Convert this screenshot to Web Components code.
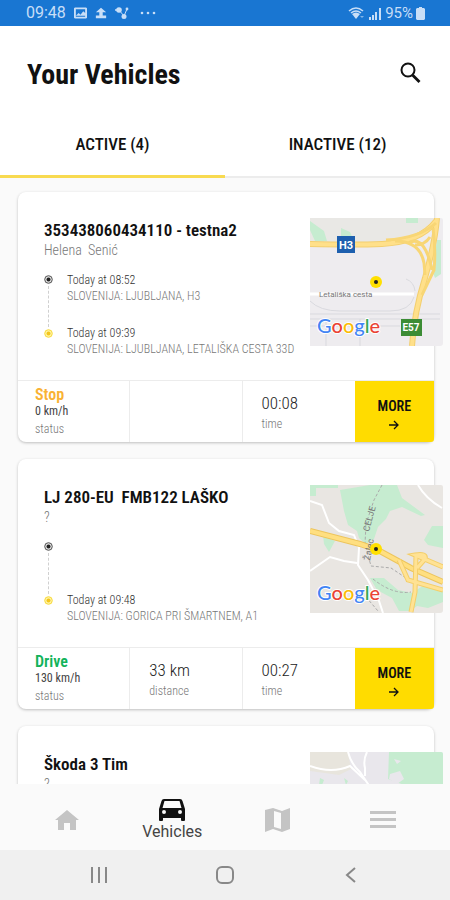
<!DOCTYPE html>
<html lang="en">
<head>
<meta charset="utf-8">
<meta name="viewport" content="width=device-width, initial-scale=1">
<title>Your Vehicles</title>
<style>
  html, body { margin: 0; height: 100%; }
  body {
    --narrow: "Roboto Condensed", "Liberation Sans Narrow", Roboto, sans-serif;
    --line: #ececec;
    --yellow: #ffdc00;
    font-family: var(--narrow);
    color: #111;
    background: #fafafa;
  }
</style>
</head>
<body>
<vehicles-app>
  <status-bar slot="top"></status-bar>
  <page-header slot="top">Your Vehicles</page-header>
  <tab-bar slot="top">
    <span slot="first">ACTIVE (4)</span>
    <span slot="second">INACTIVE (12)</span>
  </tab-bar>

  <vehicle-card>
    <span slot="name">353438060434110 - testna2</span>
    <span slot="driver">Helena  Senić</span>
    <span slot="from-time">Today at 08:52</span>
    <span slot="from-place">SLOVENIJA: LJUBLJANA, H3</span>
    <span slot="to-time">Today at 09:39</span>
    <span slot="to-place">SLOVENIJA: LJUBLJANA, LETALIŠKA CESTA 33D</span>
    <map-thumb slot="map" scene="junction"></map-thumb>
    <status-cell slot="cells" state="stop"><span slot="state">Stop</span><span slot="speed">0 km/h</span></status-cell>
    <stat-cell slot="cells"></stat-cell>
    <stat-cell slot="cells" label="time">00:08</stat-cell>
  </vehicle-card>

  <vehicle-card>
    <span slot="name">LJ 280-EU  FMB122 LAŠKO</span>
    <span slot="driver">?</span>
    <span slot="to-time">Today at 09:48</span>
    <span slot="to-place">SLOVENIJA: GORICA PRI ŠMARTNEM, A1</span>
    <map-thumb slot="map" scene="hills"></map-thumb>
    <status-cell slot="cells" state="drive"><span slot="state">Drive</span><span slot="speed">130 km/h</span></status-cell>
    <stat-cell slot="cells" label="distance">33 km</stat-cell>
    <stat-cell slot="cells" label="time">00:27</stat-cell>
  </vehicle-card>

  <vehicle-card brief>
    <span slot="name">Škoda 3 Tim</span>
    <span slot="driver">?</span>
    <map-thumb slot="map" scene="town"></map-thumb>
  </vehicle-card>

  <bottom-nav slot="bottom"></bottom-nav>
  <system-nav slot="bottom"></system-nav>
</vehicles-app>

<script>
const define = (name, html, setup) => {
  const template = document.createElement('template');
  template.innerHTML = html;
  customElements.define(name, class extends HTMLElement {
    constructor() {
      super();
      this.attachShadow({ mode: 'open' }).append(template.content.cloneNode(true));
    }
    connectedCallback() { if (setup) setup(this, this.shadowRoot); }
  });
};

define('vehicles-app', `
<style>
  :host { display: flex; flex-direction: column; height: 100vh; }
  main { flex: 1; min-height: 0; overflow: hidden; display: flex; flex-direction: column; gap: 17px; padding: 14px 16px 0 18px; box-sizing: border-box; }
</style>
<slot name="top"></slot>
<main><slot></slot></main>
<slot name="bottom"></slot>`);

define('status-bar', `
<style>
  :host { display: flex; align-items: center; justify-content: space-between; height: 26px; padding: 0 25px 0 26px; background: #1976d2; color: #c8def7; font: 16px/28px Roboto, sans-serif; }
  div { display: flex; align-items: center; gap: 8px; height: 28px; }
  .right { gap: 3px; font-size: 15px; }
  svg { display: block; fill: currentColor; }
</style>
<div>
  <span>09:48</span>
  <svg width="13" height="12" viewBox="0 0 14 12"><path fill-rule="evenodd" d="M1 0h12l1 1v10l-1 1H1l-1-1V1zM2 2v7l3-3 2 2 3-4 2 2V2zM2 10h10v-1H2z"/></svg>
  <svg width="12" height="12" viewBox="0 0 14 12"><path d="M7 0l6 5H9v4H5V5H1zM1 9h12v3H1z"/></svg>
  <svg width="14" height="12" viewBox="0 0 14 12"><circle cx="4" cy="3" r="2.800"/><circle cx="12" cy="2" r="1.400"/><circle cx="9" cy="9.500" r="2.500"/><path d="M4 3l5 6 3-7" fill="none" stroke="currentColor"/><circle cx="1" cy="3" r="1"/></svg>
  <svg width="20" height="4" viewBox="0 0 20 4"><circle cx="5" cy="2" r="1.300"/><circle cx="11" cy="2" r="1.300"/><circle cx="17" cy="2" r="1.300"/></svg>
</div>
<div class="right">
  <svg width="18" height="13" viewBox="0 0 18 13"><g fill="none" stroke="currentColor" stroke-width="1.500"><path d="M1 4q7-6 14 0M3 6q5-4 10 0"/></g><path d="M4 7q4-3 8 0l-4 5z"/><path d="M12 9l2 2 2-2z" opacity=".6"/></svg>
  <svg width="13" height="13" viewBox="0 0 13 13"><path d="M0 10h2v3H0zM3 8h2v5H3zM6 5h2v8H6z"/><path d="M10 1h2v12h-2z"/></svg>
  <span>95%</span>
  <svg width="9" height="13" viewBox="0 0 9 13"><path d="M3 0h3v1h2l1 1v10l-1 1H1l-1-1V2l1-1h2z"/></svg>
</div>`);

define('page-header', `
<style>
  :host { display: flex; align-items: center; justify-content: space-between; padding: 0 27px; height: 96px; background: #fff; }
  h1 { margin: 0; padding-top: 2px; font-size: 28px; line-height: 32px; font-weight: 700; }
  button { border: 0; padding: 0; background: none; color: #111; display: block; }
  svg { display: block; }
</style>
<h1><slot></slot></h1>
<button aria-label="Search"><svg width="24" height="24" viewBox="0 0 24 24"><circle cx="9" cy="8" r="6.500" fill="none" stroke="currentColor" stroke-width="2"/><path d="M13.500 13l7 7" stroke="currentColor" stroke-width="2.800"/></svg></button>`);

define('tab-bar', `
<style>
  :host { display: grid; grid-template-columns: 1fr 1fr; background: #fff; height: 56px; }
  button { border: 0; border-bottom: 2px solid var(--line); padding: 0 0 10px; background: none; color: #111; font: 500 17px/20px var(--narrow); }
  button[aria-selected="true"] { border-bottom: 3px solid #f8da50; }
</style>
<button role="tab" aria-selected="true"><slot name="first"></slot></button>
<button role="tab" aria-selected="false"><slot name="second"></slot></button>`);

define('vehicle-card', `
<style>
  :host { display: block; flex: none; }
  article { background: #fff; border-radius: 8px; box-shadow: 0 1px 3px rgba(0,0,0,.24); }
  .body { display: grid; grid-template-columns: 1fr 133px; align-items: start; padding: 26px 0 0 26px; margin-right: -9px; min-height: 162px; }
  h2 { margin: 0; padding-top: 1px; font-size: 17px; line-height: 22px; font-weight: 600; white-space: pre; }
  p { margin: 0; }
  .driver { font-size: 14px; line-height: 18px; font-weight: 300; color: #777; white-space: pre; }
  .trip { display: grid; grid-template-columns: 9px 1fr; column-gap: 14px; margin-top: 13px; }
  .rail { display: flex; flex-direction: column; align-items: center; padding: 3px 0 19px; }
  .rail i { flex: 1; border-left: 1px dashed #d0d0d0; margin: 2px 0; }
  .stops { display: grid; gap: 21px; }
  .stops p { min-height: 16px; font-size: 12px; line-height: 16px; font-weight: 300; white-space: nowrap; color: #777; }
  .stops .time { color: #333; }
  svg { display: block; }
  footer { display: grid; grid-template-columns: 112fr 112fr 112fr 79fr; height: 61px; border-top: 1px solid var(--line); }
  :host([brief]) footer, :host([brief]) .trip { display: none; }
  button { grid-column: 4; grid-row: 1; display: flex; flex-direction: column; align-items: center; justify-content: center; gap: 4px; border: 0; padding: 5px 0 0; background: var(--yellow); color: #111; font: 600 14px/18px var(--narrow); border-radius: 0 0 3px 0; }
</style>
<article>
  <div class="body">
    <div>
      <h2><slot name="name"></slot></h2>
      <p class="driver"><slot name="driver"></slot></p>
      <div class="trip">
        <div class="rail">
          <svg width="9" height="9" viewBox="0 0 9 9"><circle cx="4.500" cy="4.500" r="3.800" fill="#ddd" stroke="#555"/><circle cx="4.500" cy="4.500" r="2" fill="#222"/></svg>
          <i></i>
          <svg width="9" height="9" viewBox="0 0 9 9"><circle cx="4.500" cy="4.500" r="3.800" fill="#fff3a0" stroke="#f7d93c"/><circle cx="4.500" cy="4.500" r="2" fill="#f3c51d"/></svg>
        </div>
        <div class="stops">
          <div><p class="time"><slot name="from-time"></slot></p><p><slot name="from-place"></slot></p></div>
          <div><p class="time"><slot name="to-time"></slot></p><p><slot name="to-place"></slot></p></div>
        </div>
      </div>
    </div>
    <slot name="map"></slot>
  </div>
  <footer>
    <slot name="cells"></slot>
    <button><span>MORE</span><svg width="12" height="12" viewBox="0 0 12 12"><path d="M1 6h9M6 2l4 4-4 4" fill="none" stroke="currentColor" stroke-width="1.300"/></svg></button>
  </footer>
</article>`);

define('status-cell', `
<style>
  :host { display: block; padding: 5px 0 0 17px; border-right: 1px solid var(--line); --state: #f9b233; }
  :host([state="drive"]) { --state: #12b35a; }
  p { margin: 0; font-size: 12px; line-height: 14px; color: #444; }
  .state { font-size: 16px; line-height: 18px; font-weight: 600; color: var(--state); }
  .label { margin-top: 4px; font-weight: 300; color: #777; }
</style>
<p class="state"><slot name="state"></slot></p>
<p><slot name="speed"></slot></p>
<p class="label">status</p>`);

define('stat-cell', `
<style>
  :host { display: block; padding: 12px 0 0 19px; border-right: 1px solid var(--line); }
  :host(:last-of-type) { border-right: 0; }
  p { margin: 0; font-size: 17px; line-height: 20px; font-weight: 300; color: #222; }
  .label { margin-top: 3px; font-size: 12px; line-height: 16px; color: #777; }
</style>
<p><slot></slot></p>
<p class="label"></p>`, (host, root) => {
  root.querySelector('.label').textContent = host.getAttribute('label') || '';
});

const logo = `<text x="7" y="115" font-family="Lato, sans-serif" font-size="20" font-weight="500" stroke="#fff" stroke-width="2" paint-order="stroke" stroke-linejoin="round"><tspan fill="#4285f4">G</tspan><tspan fill="#ea4335">o</tspan><tspan fill="#fbbc05">o</tspan><tspan fill="#4285f4">g</tspan><tspan fill="#34a853">l</tspan><tspan fill="#ea4335">e</tspan></text>`;
const pin = `<circle cx="66" cy="64" r="6" fill="#ffe000"/><circle cx="66" cy="64" r="2" fill="#222"/>`;
const scenes = {
  junction: `
    <rect width="133" height="128" fill="#eeecef"/>
    <path d="M0 0h125l-20 20-30 4H0z" fill="#e9e8e5"/>
    <path d="M0 3l14 10 3 10H5L0 12zM31 10l9 4 4 9H31zM96 0h12v5H96zM127 22h4v34l-6 4-3-8z" fill="#c6ecd0"/>
    <g fill="none" stroke="#fff" stroke-width="3"><path d="M0 76h104"/></g>
    <g fill="none" stroke="#d9d9de"><path d="M0 83q10 10 30 10h50q20 0 24-14M0 96h130M0 101h130M96 61q8 3 9 12M0 108h90M16 101v27M50 101v27"/></g>
    <g fill="none" stroke="#f3cf70" stroke-width="6"><path d="M0 26q45 1 72 0 38-2 54-23M127 0q-2 25-12 60-11 35-13 68"/></g>
    <g fill="none" stroke="#ffe08a" stroke-width="4"><path d="M0 26q45 1 72 0 38-2 54-23M127 0q-2 25-12 60-11 35-13 68"/></g>
    <g fill="none" stroke="#f8d675" stroke-width="3"><path d="M85 23q25 0 29 22l1 12M100 24q15-6 22 28M76 22q34-2 50-17M105 27q10 0 15-8M123 10q3 22 1 42l-12 25"/></g>
    <rect x="27" y="18" width="18" height="17" fill="#1d5fae"/><text x="36" y="31" text-anchor="middle" font-family="Roboto, sans-serif" font-size="11" font-weight="700" fill="#fff">H3</text>
    <rect x="91" y="101" width="21" height="17" fill="#3c8c35"/><text x="101" y="113" text-anchor="middle" font-family="Roboto, sans-serif" font-size="10" font-weight="700" fill="#fff">E57</text>
    <text x="9" y="79" font-family="Roboto, sans-serif" font-size="8" fill="#777">Letališka cesta</text>`,
  hills: `
    <rect width="133" height="128" fill="#e9e6e2"/>
    <path d="M30 5L60 0h27l5 13 23 17-4 1-19-9-12 4-4 8-8 8-4 12-8 5-7-6-2-7-9-6-4-14zM0 0h28v3H6v8H0zM114 55l8-14h11v22l-15-3zM13 50l12 6-6 11-5-8zM60 93h14l14 12 14 3 12-8 19 6v11l-15 6-11-2-7 5H89l-7-13-15-8z" fill="#c6ecd0"/>
    <g fill="none" stroke="#fff" stroke-width="2"><path d="M0 16l12 4 7 18 10 8 15 4 5 13-1 17 10 15 11 21 4 12M0 86l20-14 14 4 13 2M108 0q8 14 24 23"/></g>
    <g fill="none" stroke="#aaa" stroke-dasharray="3 2"><path d="M72 0l-8 15-8 24-1 20 6 22 20 2 12 8 9 7M63 94q20 16 38 13M56 112l12 14"/></g>
    <g fill="none" stroke="#edc55c" stroke-width="6"><path d="M0 46l50 13 18 6 33 18 32 14"/></g>
    <g fill="none" stroke="#ffdf80" stroke-width="4"><path d="M0 46l50 13 18 6 33 18 32 14"/></g>
    <g fill="none" stroke="#f4ce68" stroke-width="5"><path d="M101 127l4-20 1-37M133 82l-28-12q12-2 10 4l-8 9M89 75l9 20 35 10"/></g>
    <g fill="none" stroke="#ffe294" stroke-width="3"><path d="M101 127l4-20 1-37M133 82l-28-12q12-2 10 4l-8 9M89 75l9 20 35 10"/></g>
    <g font-family="Roboto, sans-serif" font-size="9" fill="#777"><text transform="translate(60 76) rotate(-80)">Žalec</text><text transform="translate(59 47) rotate(-75)">CELJE</text></g>`,
  town: `
    <rect width="133" height="128" fill="#e9e7ec"/><path d="M0 0h38l3 17-12 6-29-4z" fill="#e8e5dd"/>
    <path d="M79 0h54v128H104l-7-94-19-7zM10 26l4 2-2 5H9zM34 26l4 3-2 4z" fill="#c6ecd0"/>
    <path d="M84 7l7 2-4 3zM80 22l10-3 4 8-7 5-8-5z" fill="#e9e7ec"/>
    <g fill="none" stroke="#fff" stroke-width="2"><path d="M0 14q22 8 40 0l15 14M38 0q3 12 12 20l12 18M57 0q-4 8-2 16v8"/></g>`
};

define('map-thumb', `
<style>
  :host { display: block; height: 128px; border-radius: 0 2px 3px 0; overflow: hidden; }
  svg { display: block; width: 100%; height: 100%; }
</style>
<svg viewBox="0 0 133 128" role="img" aria-label="Map"></svg>`, (host, root) => {
  const scene = host.getAttribute('scene');
  root.querySelector('svg').innerHTML = scenes[scene] + (scene === 'town' ? '' : pin + logo);
});

define('bottom-nav', `
<style>
  :host { display: block; background: #fafafa; }
  nav { display: grid; grid-template-columns: repeat(4, 1fr); height: 66px; padding: 0 14px; }
  a { display: flex; flex-direction: column; align-items: center; justify-content: center; color: #c4c4c4; text-decoration: none; padding-top: 5px; }
  a[aria-current] { color: #111; }
  span { font: 16px/20px Roboto, sans-serif; color: #444; }
  svg { display: block; fill: currentColor; }
</style>
<nav>
  <a href="#home" aria-label="Home"><svg width="24" height="22" viewBox="0 0 24 22"><path d="M12 1l12 10h-3v10h-6v-7H9v7H3V11H0z"/></svg></a>
  <a href="#vehicles" aria-current="page"><svg width="26" height="24" viewBox="0 0 26 24"><path fill-rule="evenodd" d="M5 1h16q2 0 2.500 2L26 11v11q0 1-1 1h-2q-1 0-1-1v-2H4v2q0 1-1 1H1q-1 0-1-1V11L2.500 3Q3 1 5 1zM5.500 3L3.500 10h19l-2-7zM5 12a2 2 0 100 4 2 2 0 000-4zM21 12a2 2 0 100 4 2 2 0 000-4z"/></svg><span>Vehicles</span></a>
  <a href="#map" aria-label="Map"><svg width="26" height="26" viewBox="0 0 26 26"><path fill-rule="evenodd" d="M0 3l8-2 9 3 8-3v21l-8 3-9-3-8 3zM9 4v16l7 2V6z"/></svg></a>
  <a href="#menu" aria-label="Menu"><svg width="26" height="18" viewBox="0 0 26 18"><path d="M0 0h26v3H0zM0 7h26v3H0zM0 14h26v3H0z"/></svg></a>
</nav>`);

define('system-nav', `
<style>
  :host { display: grid; grid-template-columns: repeat(3, 1fr); height: 50px; padding: 0 36px; background: #f0f0f0; }
  button { display: grid; place-items: center; border: 0; padding: 0; background: none; color: #888; }
  svg { display: block; fill: none; stroke: currentColor; stroke-width: 2; }
</style>
<button aria-label="Recent apps"><svg width="18" height="18" viewBox="0 0 18 18"><path d="M2 1v16M9 1v16M16 1v16"/></svg></button>
<button aria-label="Home"><svg width="20" height="20" viewBox="0 0 20 20"><rect x="2" y="2" width="16" height="16" rx="5"/></svg></button>
<button aria-label="Back"><svg width="12" height="18" viewBox="0 0 12 18"><path d="M10 2L2 9l8 7"/></svg></button>`);
</script>
</body>
</html>
